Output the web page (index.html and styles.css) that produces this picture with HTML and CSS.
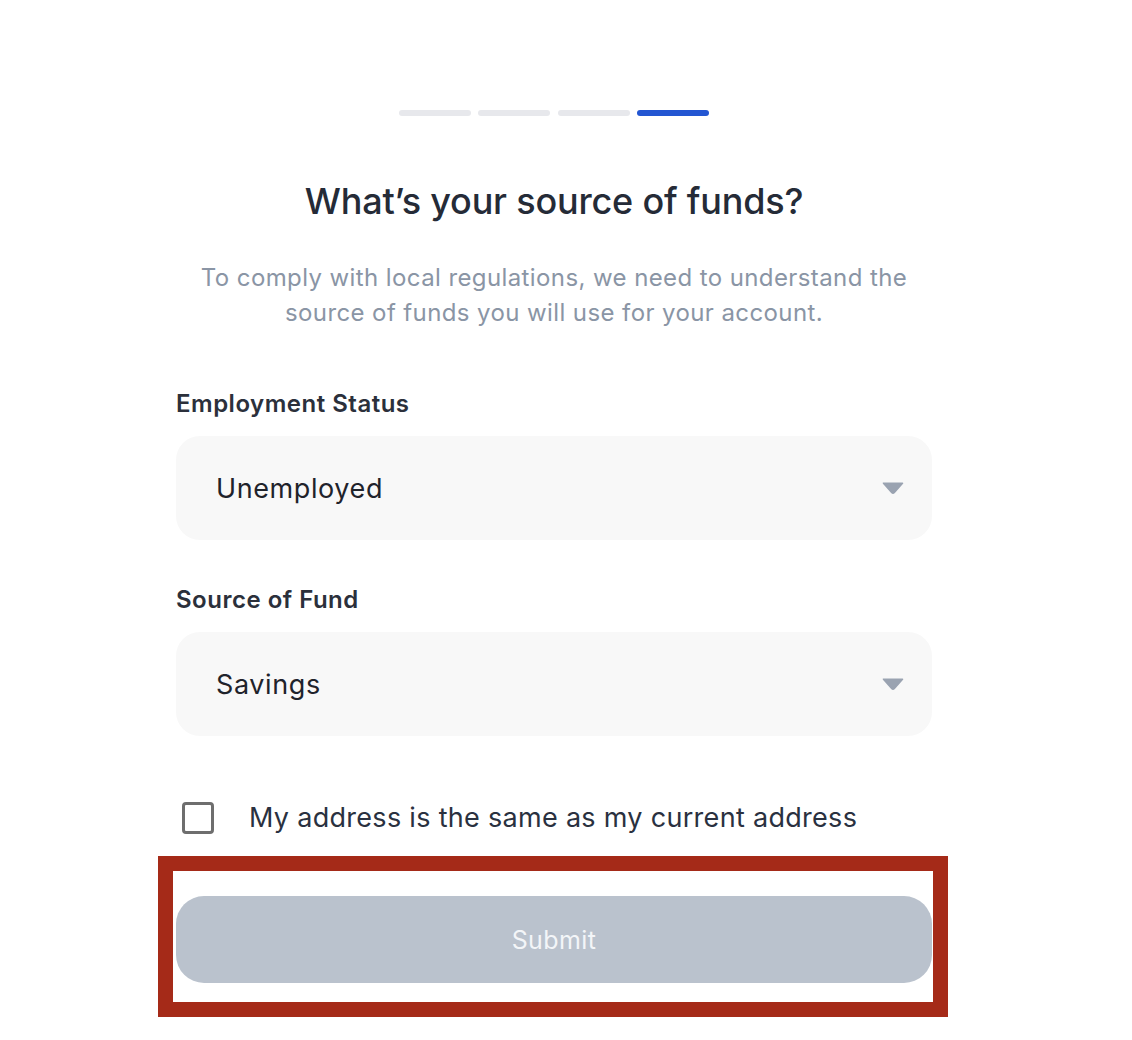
FILE: index.html
```html
<!DOCTYPE html>
<html lang="en">
<head>
    <meta charset="UTF-8">
    <meta name="viewport" content="width=device-width, initial-scale=1.0">
    <title>Source of Funds</title>
    <link rel="stylesheet" href="styles.css">
</head>
<body>
    <div class="page">
        <!-- Progress -->
        <div class="steps">
            <span class="step"></span>
            <span class="step"></span>
            <span class="step"></span>
            <span class="step active"></span>
        </div>

        <h1>What’s your source of funds?</h1>
        <p class="intro">To comply with local regulations, we need to understand the source of funds you will use for your account.</p>

        <div class="field">
            <label>Employment Status</label>
            <div class="select">
                <span>Unemployed</span>
                <svg class="caret" width="22" height="12" viewBox="0 0 22 12"><path d="M1.5 1.2 H20.5 L12.3 10.4 Q11 11.8 9.7 10.4 Z" fill="#9aa3b1" stroke="#9aa3b1" stroke-width="1.6" stroke-linejoin="round"/></svg>
            </div>
        </div>

        <div class="field">
            <label>Source of Fund</label>
            <div class="select">
                <span>Savings</span>
                <svg class="caret" width="22" height="12" viewBox="0 0 22 12"><path d="M1.5 1.2 H20.5 L12.3 10.4 Q11 11.8 9.7 10.4 Z" fill="#9aa3b1" stroke="#9aa3b1" stroke-width="1.6" stroke-linejoin="round"/></svg>
            </div>
        </div>

        <div class="check-row">
            <span class="checkbox"></span>
            <span>My address is the same as my current address</span>
        </div>

        <div class="submit-wrap">
            <button class="submit">Submit</button>
            <div class="highlight"></div>
        </div>
    </div>
</body>
</html>
```

FILE: styles.css
```css
body {
    margin: 0;
    font-family: Inter, "Noto Sans", sans-serif;
    background: #fff;
}
.page {
    width: 756px;
    margin-left: 176px;
    padding-top: 110px;
    padding-bottom: 58px;
}
.steps {
    display: flex;
    justify-content: center;
    gap: 7.3px;
}
.step {
    width: 72px;
    height: 6px;
    border-radius: 3px;
    background: #e7e8ec;
}
.step.active {
    background: #2356d2;
}
h1 {
    margin: 63px 0 0;
    font-size: 36px;
    line-height: 44px;
    font-weight: 500;
    color: #252b37;
    text-align: center;
    letter-spacing: -0.2px;
}
.intro {
    margin: 37px 0 0;
    font-size: 24px;
    line-height: 35px;
    letter-spacing: 0.4px;
    color: #8a95a5;
    text-align: center;
}
.field {
    margin-top: 59px;
}
.field + .field {
    margin-top: 45px;
}
.field label {
    display: block;
    margin-bottom: 17px;
    font-size: 24px;
    line-height: 30px;
    font-weight: 600;
    letter-spacing: 0.5px;
    color: #2b303b;
}
.select {
    height: 104px;
    box-sizing: border-box;
    padding: 0 28px 0 40px;
    display: flex;
    align-items: center;
    justify-content: space-between;
    background: #f8f8f8;
    border-radius: 24px;
    font-size: 27px;
    letter-spacing: 0.6px;
    color: #1f232b;
}
.check-row {
    margin-top: 65px;
    padding-left: 6px;
    display: flex;
    align-items: center;
    gap: 35px;
    font-size: 27px;
    letter-spacing: 0.3px;
    color: #2a3140;
}
.checkbox {
    width: 32px;
    height: 32px;
    box-sizing: border-box;
    border: 3px solid #6e6e6e;
    border-radius: 4px;
}
.submit-wrap {
    position: relative;
    margin-top: 62px;
}
.submit {
    display: block;
    width: 100%;
    height: 87px;
    border: none;
    border-radius: 28px;
    background: #bac2cd;
    color: #f3f5f8;
    font-family: inherit;
    font-size: 25px;
    letter-spacing: 0.4px;
}
/* annotation frame drawn over the button */
.highlight {
    position: absolute;
    top: -40px;
    bottom: -34px;
    left: -18px;
    right: -16px;
    border: 15px solid #a52a18;
    pointer-events: none;
}
```
